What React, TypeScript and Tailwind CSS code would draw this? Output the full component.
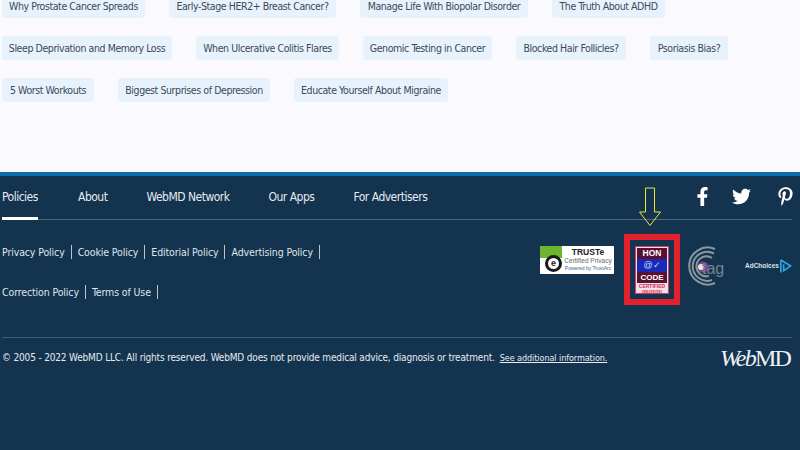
import { FaFacebookF, FaTwitter, FaPinterestP } from "react-icons/fa";

const rows = [
  [["Why Prostate Cancer Spreads", "w-[143px]"], ["Early-Stage HER2+ Breast Cancer?", "w-[167px]"], ["Manage Life With Biopolar Disorder", "w-[168px]"], ["The Truth About ADHD", "w-[113px]"]],
  [["Sleep Deprivation and Memory Loss", "w-[170px]"], ["When Ulcerative Colitis Flares", "w-[143px]"], ["Genomic Testing in Cancer", "w-[129px]"], ["Blocked Hair Follicles?", "w-[110px]"], ["Psoriasis Bias?", "w-[78px]"]],
  [["5 Worst Workouts", "w-[92px]"], ["Biggest Surprises of Depression", "w-[152px]"], ["Educate Yourself About Migraine", "w-[154px]"]],
];
const base = "font-['DejaVu_Sans_Condensed','DejaVu_Sans',sans-serif]";

function Sep({ children }: { children: string }) {
  return <span className="border-r border-[#b9c4cd] pr-[6px] mr-[6px] text-[10.5px] tracking-[-0.12px] leading-[14px] text-[#dfe5ea] whitespace-nowrap">{children}</span>;
}

function HonBadge() {
  return (
    <div className="w-[34px] h-[48px] bg-[#f3dfe6] border border-[#d0406a] flex flex-col items-center p-[1px] font-['Liberation_Sans',sans-serif] font-bold leading-none">
      <div className="w-full h-[35px] flex flex-col items-center bg-[#1a1a50]">
        <div className="w-full h-[11px] bg-[#5a1030] text-white text-[8.5px] text-center leading-[11px]">HON</div>
        <div className="w-full h-[13px] bg-[#1a2ab8] text-[#cfd8ff] text-[9px] text-center leading-[13px] font-normal">@✓</div>
        <div className="w-full h-[11px] bg-[#5a1030] text-white text-[8px] text-center leading-[11px]">CODE</div>
      </div>
      <div className="text-[5px] text-[#d0305a] mt-[1px] whitespace-nowrap">CERTIFIED</div>
      <div className="text-[5.5px] text-[#d0305a] mt-[1px] whitespace-nowrap">08/2020</div>
    </div>
  );
}

function Truste() {
  return (
    <div className="relative w-[74px] h-[28px] bg-white rounded-[1px] flex font-['Liberation_Sans',sans-serif]">
      <div className="w-[22px] h-[12px] bg-[#6cb52d]" />
      <div className="absolute left-[5px] top-[9px] w-[17px] h-[17px] rounded-full bg-white border-[3px] border-[#1a1a1a] flex items-center justify-center text-[9px] font-bold text-[#1a1a1a] leading-none">e</div>
      <div className="flex-1 flex flex-col items-center pt-[2px] leading-none">
        <span className="text-[8.5px] font-bold text-[#222]">TRUSTe</span>
        <span className="text-[6.5px] text-[#666] mt-[1px]">Certified Privacy</span>
        <span className="text-[5px] text-[#3b5f9a] mt-[2px]">Powered by TrustArc</span>
      </div>
    </div>
  );
}

function Tag() {
  return (
    <div className="relative w-[37px] h-[40px]">
      <svg width="37" height="40" viewBox="0 0 37 40" fill="none">
        <path d="M27 3 A18.5 18.5 0 1 0 27 37" stroke="#8b979f" strokeWidth="2" />
        <path d="M26 7.5 A14.5 14.5 0 1 0 24 34" stroke="#8b979f" strokeWidth="2" />
        <path d="M24 12 A10 10 0 1 0 21 30" stroke="#8b979f" strokeWidth="2" />
        <circle cx="15" cy="21" r="5.5" fill="#7a4a96" />
        <circle cx="13" cy="21" r="3" fill="#e5e5e5" />
      </svg>
      <span className="absolute left-[14px] top-[14px] text-[16px] leading-[18px] text-[#77848d] font-['Liberation_Sans',sans-serif]">tag</span>
    </div>
  );
}

export default function App() {
  return (
    <div className={`w-[800px] h-[450px] overflow-hidden flex flex-col ${base}`}>
      <div className="h-[178px] shrink-0 bg-[#f9f9fe] pl-[2px] -mt-[6px] flex flex-col gap-[18px]">
        {rows.map((r, i) => (
          <div key={i} className="flex gap-[24px]">
            {r.map(([t, w]) => (
              <div key={t} className={`${w} h-[24px] pt-[1px] rounded-[3px] bg-[#e8f2fd] flex items-center justify-center text-[10.5px] tracking-[-0.42px] text-[#3a4a58] whitespace-nowrap`}>{t}</div>
            ))}
          </div>
        ))}
      </div>
      <footer className="relative flex-1 bg-[#13334f] border-t-4 border-[#0a6db0] pl-[2px] pr-[8px] flex flex-col">
        <div className="flex h-[44px] items-start border-b border-[#4c677b] shrink-0 justify-between">
          <div className="flex gap-[39px] pt-[12px] text-[12px] tracking-[-0.5px] leading-[18px] text-[#e6ebef]">
            <div className="relative h-[32px] w-[36px] mr-[1px] border-b-[3px] border-white">Policies</div>
            <span>About</span>
            <span>WebMD Network</span>
            <span>Our Apps</span>
            <span>For Advertisers</span>
          </div>
          <div className="flex items-center text-white text-[19px] pt-[11px] -mr-[3px]">
            <FaFacebookF className="mr-[20px]" />
            <FaTwitter className="mr-[25px]" />
            <FaPinterestP />
          </div>
        </div>
        <div className="flex justify-between h-[118px] border-b border-[#3f5c72] shrink-0">
          <div className="pt-[25px] flex flex-col gap-[26px]">
            <div className="flex"><Sep>Privacy Policy</Sep><Sep>Cookie Policy</Sep><Sep>Editorial Policy</Sep><Sep>Advertising Policy</Sep></div>
            <div className="flex"><Sep>Correction Policy</Sep><Sep>Terms of Use</Sep></div>
          </div>
          <div className="flex items-start pt-[26px]">
            <Truste />
            <div className="ml-[10px] -mt-[12px] w-[56px] h-[71px] border-[6px] border-[#e3202b] flex items-center justify-center"><HonBadge /></div>
            <div className="ml-[8px]"><Tag /></div>
            <div className="ml-[20px] mt-[12px] w-[47px] flex items-center justify-between">
              <span className="text-[6.5px] font-semibold text-[#dbe3e9] font-['Liberation_Sans',sans-serif]">AdChoices</span>
              <svg width="14" height="16" viewBox="0 0 14 16" fill="none"><path d="M2 1.5 L12.5 8 L5 13 L5 6" stroke="#2aa8e0" strokeWidth="1.8" /><path d="M2 1.5 V15" stroke="#2aa8e0" strokeWidth="1.8" /></svg>
            </div>
          </div>
        </div>
        <div className="flex justify-between items-start pt-[9px]">
          <div className="flex items-center text-[10px] tracking-[-0.17px] leading-[22px] text-[#e6ebef] whitespace-nowrap">
            <span>© 2005 - 2022 WebMD LLC. All rights reserved. WebMD does not provide medical advice, diagnosis or treatment.</span>
            <span className="ml-[5px] underline text-[9px] font-medium tracking-[-0.08px]">See additional information.</span>
          </div>
          <div className="mr-[2px] text-[24px] leading-[22px] text-[#eef1f4] font-['Liberation_Serif',serif] tracking-[-1.8px] whitespace-nowrap"><span className="italic">Web</span>MD</div>
        </div>
        <svg className="absolute left-[638px] top-[11px]" width="24" height="40" viewBox="0 0 24 40" fill="none">
          <path d="M7.5 1 H16.5 V25 H22.5 L12 38.5 L1.5 25 H7.5 Z" stroke="#e8e83a" strokeWidth="1" />
        </svg>
      </footer>
    </div>
  );
}
